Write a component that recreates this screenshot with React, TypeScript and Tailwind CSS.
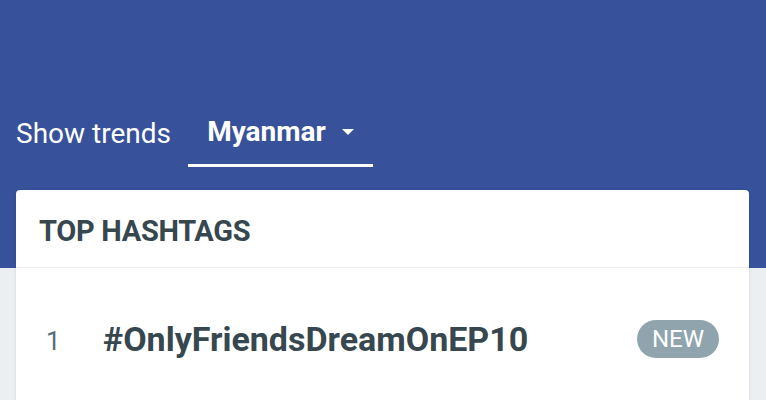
import React from "react";

export default function App() {
  return (
    <div className="relative w-[766px] h-[400px] overflow-hidden bg-[#eceff1]" style={{ fontFamily: "Roboto, 'Noto Sans', sans-serif" }}>
      <div className="bg-[#37519a] h-[268px] pt-[107px]">
        <div className="flex items-end pl-[16px] h-[60px]">
          <div className="text-white text-[28px] leading-none pb-[19px]">Show trends</div>
          <div className="ml-[17px] w-[185px] h-[60px] border-b-[3px] border-white flex items-center justify-center gap-[16px] pb-[8px]">
            <span className="text-white font-bold text-[28px] leading-none">Myanmar</span>
            <svg width="12" height="6" viewBox="0 0 12 6"><path d="M0 0h12L6 6z" fill="white" /></svg>
          </div>
        </div>
      </div>
      <div className="absolute left-[16px] top-[190px] w-[733px] h-[230px] bg-white rounded-[4px] shadow-sm">
        <div className="h-[78px] flex items-center pl-[23px] pt-[6px] border-b border-[#eceff1]">
          <span className="text-[#37474f] font-bold text-[29px] tracking-[-0.3px] leading-none">TOP HASHTAGS</span>
        </div>
        <div className="h-[142px] flex items-center pl-[30px] pr-[30px]">
          <span className="text-[#546e7a] text-[26px] w-[57px] leading-none pt-[4px]">1</span>
          <span className="text-[#37474f] font-bold text-[34px] flex-1 leading-none">#OnlyFriendsDreamOnEP10</span>
          <span className="bg-[#90a4ae] text-white text-[24px] leading-none rounded-full px-[15px] h-[38px] flex items-center">NEW</span>
        </div>
      </div>
    </div>
  );
}
